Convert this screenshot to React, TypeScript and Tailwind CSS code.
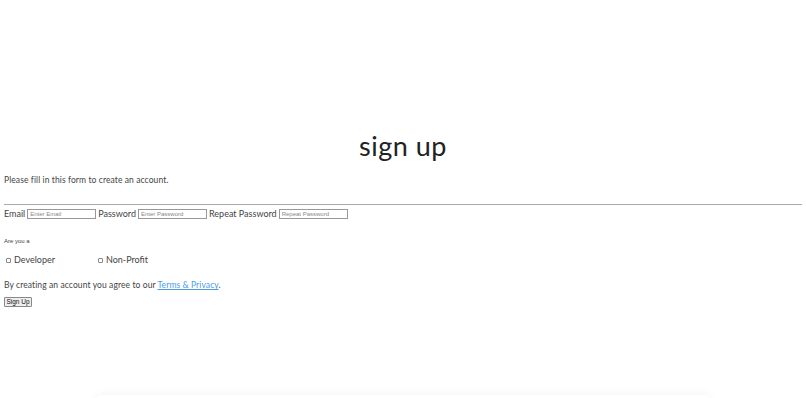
export default function App() {
	return (
		<div className="relative h-[398px] w-[806px] overflow-hidden bg-white font-['Lato',sans-serif] text-[#444]">
			<div className="px-1 pt-[130px]">
				<h1 className="text-center text-[27px] leading-[32px] font-normal tracking-[0.5px] text-[#222]">sign up</h1>
				<p className="mt-[12px] text-[8.5px] leading-[12px] tracking-[0.1px]">Please fill in this form to create an account.</p>
				<hr className="mt-[18px] border-t border-[#aaa]" />
				<div className="mt-[2px] flex items-center gap-[2px] text-[9px] leading-[14px]">
					<label>Email</label>
					<input
						placeholder="Enter Email"
						className="h-[10px] w-[69px] border border-[#999] px-[2px] font-['Liberation_Sans',sans-serif] text-[6px] placeholder:text-[#888]"
					/>
					<label>Password</label>
					<input
						placeholder="Enter Password"
						className="h-[10px] w-[69px] border border-[#999] px-[2px] font-['Liberation_Sans',sans-serif] text-[6px] placeholder:text-[#888]"
					/>
					<label>Repeat Password</label>
					<input
						placeholder="Repeat Password"
						className="h-[10px] w-[69px] border border-[#999] px-[2px] font-['Liberation_Sans',sans-serif] text-[6px] placeholder:text-[#888]"
					/>
				</div>
				<p className="mt-[16px] font-['Liberation_Sans',sans-serif] text-[6px] leading-[8px]">Are you a</p>
				<div className="mt-[8px] flex items-center text-[9px] leading-[14px]">
					<label className="flex w-[94px] items-center gap-[3px] pl-[2px]">
						<span className="h-[5px] w-[5px] rounded-[1px] border border-[#888]" />
						Developer
					</label>
					<label className="flex items-center gap-[3px]">
						<span className="h-[5px] w-[5px] rounded-[1px] border border-[#888]" />
						Non-Profit
					</label>
				</div>
				<p className="mt-[12px] text-[8.5px] leading-[12px] tracking-[0.1px]">
					By creating an account you agree to our{" "}
					<a className="text-[#4a9be8] underline">Terms &amp; Privacy</a>.
				</p>
				<button className="mt-[6px] block h-[10px] w-[28px] rounded-[1px] border border-[#888] bg-[#eee] font-['Liberation_Sans',sans-serif] text-[6.5px] leading-[8px] text-[#111]">
					Sign Up
				</button>
			</div>
			<div className="absolute top-[395px] left-[96px] h-[20px] w-[614px] rounded-t-[6px] shadow-[0_-2px_8px_rgba(0,0,0,0.04)]" />
		</div>
	);
}
